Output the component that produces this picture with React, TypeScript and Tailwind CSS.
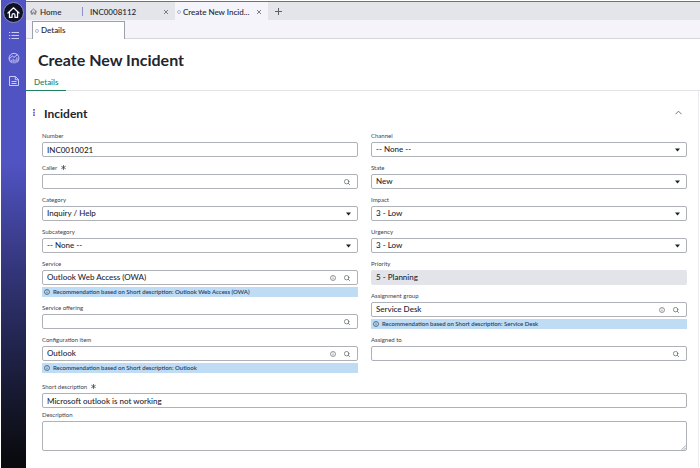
import { useId, type ReactNode } from "react";

const CONTROL =
  "h-[15px] w-full rounded-xs border border-[#aeb1b8] bg-white px-1 text-[8px] leading-[13px] font-medium text-[#22252f] outline-none";

function HomeGlyph({ className }: { className: string }) {
  return (
    <svg viewBox="0 0 16 16" className={className} fill="none" stroke="currentColor" strokeWidth="1.5" strokeLinejoin="round" strokeLinecap="round">
      <path d="M1.200 8.600 8 2.200l6.800 6.400" />
      <path d="M3 7.200V14h3.200v-2.800a1.800 1.800 0 0 1 3.600 0V14H13V7.200" />
    </svg>
  );
}

function ListGlyph() {
  return (
    <svg viewBox="0 0 12 12" className="size-3" fill="none" stroke="currentColor" strokeWidth="1">
      <path d="M3.500 3.500H11M3.500 6.500H11M3.500 9.500H11" />
      <path d="M1 3.500h1.200M1 6.500h1.200M1 9.500h1.200" />
    </svg>
  );
}

function AnalyticsGlyph() {
  return (
    <svg viewBox="0 0 12 12" className="size-3" fill="none" stroke="currentColor" strokeWidth="1" strokeLinecap="round" strokeLinejoin="round">
      <path d="M2.200 9.600a5 5 0 1 1 7.600 0" />
      <path d="M1.400 6.800 4.300 4l1.700 1.400L9.400 2.600" />
      <path d="M3.200 10.500V8.200M5.100 11V7.200M7 11V7.800M8.900 10.300V5.800" />
    </svg>
  );
}

function DocumentGlyph() {
  return (
    <svg viewBox="0 0 12 12" className="size-3" fill="none" stroke="currentColor" strokeWidth="1" strokeLinejoin="round">
      <path d="M1.500 1.500h6l3 3v6h-9z" />
      <path d="M7.300 1.500v3.200h3.200M3.500 6.500h5M3.500 8.500h5" />
    </svg>
  );
}

function InfoGlyph({ className }: { className: string }) {
  return (
    <svg viewBox="0 0 12 12" className={className} fill="none" stroke="currentColor" strokeWidth="1.300">
      <circle cx="6" cy="6" r="5" />
      <path d="M6 5.300v3.500M6 3v1.300" />
    </svg>
  );
}

function SearchGlyph() {
  return (
    <svg viewBox="0 0 12 12" className="size-[6px]" fill="none" stroke="currentColor" strokeWidth="1.400" strokeLinecap="round">
      <circle cx="5.300" cy="5.300" r="4.500" />
      <path d="M8.700 8.700 11.300 11.300" />
    </svg>
  );
}

function CloseGlyph() {
  return (
    <svg viewBox="0 0 6 6" className="size-[6px]" fill="none" stroke="currentColor" strokeWidth="0.800">
      <path d="m1 1 4 4M5 1 1 5" />
    </svg>
  );
}

function Label({ id, text, required }: { id: string; text: string; required?: boolean }) {
  return (
    <label htmlFor={id} className="mb-0.5 flex h-[9px] items-center gap-1 text-[6px] leading-[9px] text-[#3c3f4a]">
      {text}
      {required && (
        <svg viewBox="0 0 6 6" className="size-[5px]" stroke="currentColor" strokeWidth="0.900" aria-label="required">
          <path d="M3 0v6M0.400 1.500l5.200 3M5.600 1.500l-5.200 3" />
        </svg>
      )}
    </label>
  );
}

function TextField({ label, value, required }: { label: string; value: string; required?: boolean }) {
  const id = useId();
  return (
    <div>
      <Label id={id} text={label} required={required} />
      <input id={id} type="text" defaultValue={value} className={`block ${CONTROL}`} />
    </div>
  );
}

function SelectField({ label, value }: { label: string; value: string }) {
  const id = useId();
  return (
    <div>
      <Label id={id} text={label} />
      <div className="relative">
        <select id={id} defaultValue={value} className={`block appearance-none ${CONTROL}`}>
          <option>{value}</option>
        </select>
        <svg viewBox="0 0 6 4" className="pointer-events-none absolute top-[6px] right-[7px] h-[4px] w-[5px] text-[#1c1e26]" fill="currentColor">
          <path d="M0 0.300h6L3 3.800z" />
        </svg>
      </div>
    </div>
  );
}

function LookupField({ label, value = "", required, hint }: { label: string; value?: string; required?: boolean; hint?: string }) {
  const id = useId();
  return (
    <div>
      <Label id={id} text={label} required={required} />
      <div className={`flex items-center gap-2 ${CONTROL}`}>
        <input id={id} type="text" defaultValue={value} className="h-[13px] min-w-0 flex-1 outline-none" />
        {value && (
          <button type="button" aria-label={`Preview ${label}`} className="text-[#5c5f68]">
            <InfoGlyph className="size-[6px]" />
          </button>
        )}
        <button type="button" aria-label={`Look up ${label}`} className="mr-[3px] text-[#5c5f68]">
          <SearchGlyph />
        </button>
      </div>
      {hint && (
        <p className="mt-0.5 flex h-[10px] items-center gap-[3px] bg-[#bfdcf4] px-0.5 text-[6px] leading-[10px] font-semibold text-[#25405c]">
          <InfoGlyph className="size-[6px] shrink-0" />
          {hint}
        </p>
      )}
    </div>
  );
}

function ReadOnlyField({ label, value }: { label: string; value: string }) {
  const id = useId();
  return (
    <div>
      <Label id={id} text={label} />
      <input id={id} type="text" readOnly value={value} className="block h-[15px] w-full rounded-xs bg-[#e3e4ea] px-[5px] text-[8px] leading-[15px] font-medium text-[#22252f] outline-none" />
    </div>
  );
}

function RailButton({ label, children }: { label: string; children: ReactNode }) {
  return (
    <button type="button" aria-label={label} className="flex h-[23px] items-center justify-center text-[#c9cbf3]">
      {children}
    </button>
  );
}

export default function App() {
  return (
    <div className="flex min-h-screen bg-white pl-px font-['Lato','Open_Sans',sans-serif] text-[#22252f]">
      <nav className="flex w-[25px] shrink-0 flex-col bg-linear-to-b from-[#5053c2] from-35% via-[#33357a] via-58% to-[#0a0b0f] to-98% pt-[2px]">
        <button type="button" aria-label="Home" className="mx-auto flex size-[21px] items-center justify-center rounded-full border border-[#8d90b8] bg-[#0f1126] text-white">
          <HomeGlyph className="size-[13px]" />
        </button>
        <RailButton label="Lists"><ListGlyph /></RailButton>
        <RailButton label="Analytics"><AnalyticsGlyph /></RailButton>
        <RailButton label="Records"><DocumentGlyph /></RailButton>
      </nav>

      <div className="min-w-0 flex-1">
        <div className="mt-px flex h-[19px] items-stretch border-t border-[#6f7174] bg-[#e4e5eb] text-[8px] leading-[18px] font-medium">
          <button type="button" className="flex w-14 items-center gap-[3px] pt-px pl-1">
            <HomeGlyph className="size-[7px] text-[#444751]" />
            Home
          </button>
          <div className="flex w-[93px] items-center pt-px">
            <span className="h-[9px] w-px bg-[#8d90c9]" />
            <button type="button" className="ml-[7px] flex-1 text-left">INC0008112</button>
            <button type="button" aria-label="Close INC0008112" className="mr-1.5 text-[#5c5f68]"><CloseGlyph /></button>
          </div>
          <div className="flex w-[93px] items-center gap-[2px] bg-[#f5f4fa] pt-px pl-0.5">
            <span className="size-[4px] shrink-0 rounded-full border border-[#b5b7c0]" />
            <button type="button" className="flex-1 text-left whitespace-nowrap">Create New Incid...</button>
            <button type="button" aria-label="Close Create New Incident" className="mr-1.5 text-[#5c5f68]"><CloseGlyph /></button>
          </div>
          <button type="button" aria-label="New tab" className="flex w-5 items-center justify-center pt-px text-[#5c5f68]">
            <svg viewBox="0 0 7 7" className="size-[7px]" stroke="currentColor" strokeWidth="1"><path d="M3.500 0v7M0 3.500h7" /></svg>
          </button>
        </div>

        <div className="flex h-[19px] items-end border-b border-[#d5d6dc] bg-[#f5f4fa] pl-1.5 text-[8px]">
          <button type="button" className="-mb-px flex h-[18px] w-[93px] items-center gap-[2px] border border-b-0 border-[#9da0a9] bg-white pl-0.5 leading-[17px] font-medium">
            <span className="size-[4px] rounded-full border border-[#b5b7c0]" />
            Details
          </button>
        </div>

        <h1 className="mt-[11px] pl-3 text-[16px] leading-5 font-bold text-[#22252f]">Create New Incident</h1>

        <div className="mt-[5px] flex border-b border-[#e3e4e8] text-[8px]">
          <button type="button" className="-mb-px h-4 border-b border-[#1d8160] px-2 leading-[15px] font-medium text-[#1d8160]">Details</button>
        </div>

        <main className="mr-px border-r border-[#ececf3] pr-[11px] pb-4 pl-4">
          <div className="-ml-2.5 flex items-center gap-2 pt-[15px]">
            <svg viewBox="0 0 2 8" className="mx-px mb-1 h-[7px] w-[2px] text-[#6265c4]" fill="currentColor">
              <path d="M0 0h2v2H0zM0 3h2v2H0zM0 6h2v2H0z" />
            </svg>
            <h2 className="flex-1 text-[12px] leading-4 font-bold">Incident</h2>
            <button type="button" aria-label="Collapse Incident" className="mr-[5px] mb-1 text-[#5c5f68]">
              <svg viewBox="0 0 8 5" className="h-[5px] w-[7px]" fill="none" stroke="currentColor" strokeWidth="1"><path d="M0.500 4.500 4 1l3.500 3.500" /></svg>
            </button>
          </div>

          <div className="mt-[9px] grid grid-cols-2 gap-x-[13px]">
            <div className="flex flex-col gap-1.5">
              <TextField label="Number" value="INC0010021" />
              <LookupField label="Caller" required />
              <SelectField label="Category" value="Inquiry / Help" />
              <SelectField label="Subcategory" value="-- None --" />
              <LookupField label="Service" value="Outlook Web Access (OWA)" hint="Recommendation based on Short description: Outlook Web Access (OWA)" />
              <LookupField label="Service offering" />
              <LookupField label="Configuration item" value="Outlook" hint="Recommendation based on Short description: Outlook" />
            </div>
            <div className="flex flex-col gap-1.5">
              <SelectField label="Channel" value="-- None --" />
              <SelectField label="State" value="New" />
              <SelectField label="Impact" value="3 - Low" />
              <SelectField label="Urgency" value="3 - Low" />
              <ReadOnlyField label="Priority" value="5 - Planning" />
              <LookupField label="Assignment group" value="Service Desk" hint="Recommendation based on Short description: Service Desk" />
              <LookupField label="Assigned to" />
            </div>
          </div>

          <div className="mt-[9px] flex flex-col gap-0.5">
            <TextField label="Short description" value="Microsoft outlook is not working" required />
            <div>
              <Label id="description" text="Description" />
              <div className="relative">
                <textarea id="description" className="block h-[30px] w-full resize-none rounded-xs border border-[#aeb1b8] bg-white px-1 text-[8px] outline-none" />
                <svg viewBox="0 0 5 5" className="pointer-events-none absolute right-px bottom-px size-[5px] text-[#8b8e97]" stroke="currentColor" strokeWidth="0.800">
                  <path d="M0.500 4.800 4.800 0.500M2.800 4.800l2-2" />
                </svg>
              </div>
            </div>
          </div>
        </main>
      </div>
    </div>
  );
}
